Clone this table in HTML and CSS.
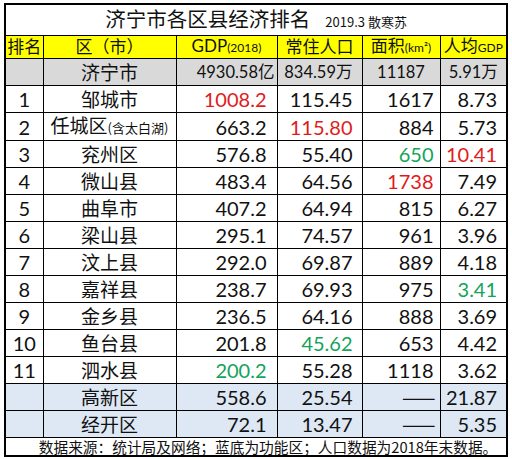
FILE: index.html
```html
<!DOCTYPE html>
<html lang="zh-CN">
<head>
  <meta charset="UTF-8">
  <title>济宁市各区县经济排名</title>
  <link rel="stylesheet" href="styles.css">
</head>
<body>

  <table class="rank">
    <colgroup>
      <col class="c-no">
      <col class="c-name">
      <col class="c-gdp">
      <col class="c-pop">
      <col class="c-area">
      <col class="c-avg">
    </colgroup>

    <tr class="title">
      <td colspan="6">
        <span class="big">济宁市各区县经济排名</span>
        <span class="by">2019.3 散寒苏</span>
      </td>
    </tr>

    <tr class="head">
      <td>排名</td>
      <td>区（市）</td>
      <td>GDP<small>(2018)</small></td>
      <td>常住人口</td>
      <td>面积<small>(km²)</small></td>
      <td>人均<small>GDP</small></td>
    </tr>

    <tr class="total">
      <td></td>
      <td class="name">济宁市</td>
      <td class="gdp">4930.58亿</td>
      <td class="pop">834.59万</td>
      <td class="mid">11187</td>
      <td class="mid">5.91万</td>
    </tr>

    <tr>
      <td class="no">1</td><td class="name">邹城市</td>
      <td class="gdp red">1008.2</td><td class="pop">115.45</td><td class="area">1617</td><td class="avg">8.73</td>
    </tr>
    <tr>
      <td class="no">2</td><td class="name">任城区<small>(含太白湖)</small></td>
      <td class="gdp">663.2</td><td class="pop red">115.80</td><td class="area">884</td><td class="avg">5.73</td>
    </tr>
    <tr>
      <td class="no">3</td><td class="name">兖州区</td>
      <td class="gdp">576.8</td><td class="pop">55.40</td><td class="area green">650</td><td class="avg red">10.41</td>
    </tr>
    <tr>
      <td class="no">4</td><td class="name">微山县</td>
      <td class="gdp">483.4</td><td class="pop">64.56</td><td class="area red">1738</td><td class="avg">7.49</td>
    </tr>
    <tr>
      <td class="no">5</td><td class="name">曲阜市</td>
      <td class="gdp">407.2</td><td class="pop">64.94</td><td class="area">815</td><td class="avg">6.27</td>
    </tr>
    <tr>
      <td class="no">6</td><td class="name">梁山县</td>
      <td class="gdp">295.1</td><td class="pop">74.57</td><td class="area">961</td><td class="avg">3.96</td>
    </tr>
    <tr>
      <td class="no">7</td><td class="name">汶上县</td>
      <td class="gdp">292.0</td><td class="pop">69.87</td><td class="area">889</td><td class="avg">4.18</td>
    </tr>
    <tr>
      <td class="no">8</td><td class="name">嘉祥县</td>
      <td class="gdp">238.7</td><td class="pop">69.93</td><td class="area">975</td><td class="avg green">3.41</td>
    </tr>
    <tr>
      <td class="no">9</td><td class="name">金乡县</td>
      <td class="gdp">236.5</td><td class="pop">64.16</td><td class="area">888</td><td class="avg">3.69</td>
    </tr>
    <tr>
      <td class="no">10</td><td class="name">鱼台县</td>
      <td class="gdp">201.8</td><td class="pop green">45.62</td><td class="area">653</td><td class="avg">4.42</td>
    </tr>
    <tr>
      <td class="no">11</td><td class="name">泗水县</td>
      <td class="gdp green">200.2</td><td class="pop">55.28</td><td class="area">1118</td><td class="avg">3.62</td>
    </tr>

    <tr class="zone">
      <td></td><td class="name">高新区</td>
      <td class="gdp">558.6</td><td class="pop">25.54</td><td class="area dash">——</td><td class="avg">21.87</td>
    </tr>
    <tr class="zone">
      <td></td><td class="name">经开区</td>
      <td class="gdp">72.1</td><td class="pop">13.47</td><td class="area dash">——</td><td class="avg">5.35</td>
    </tr>

    <tr class="foot">
      <td colspan="6">数据来源：统计局及网络；蓝底为功能区；人口数据为2018年末数据。</td>
    </tr>
  </table>

</body>
</html>
```

FILE: styles.css
```css
body {
  margin: 0;
  background-color: #fff;
  color: #111;
  font-family: Lato, "Noto Sans CJK SC", sans-serif;
}

.rank {
  margin: 3px 0 0 4px;
  width: 504px;
  table-layout: fixed;
  border-collapse: collapse;
  border: 2px solid #000;
}

.c-no { width: 38px; }
.c-name { width: 133px; }
.c-gdp { width: 101px; }
.c-pop { width: 85px; }
.c-area { width: 78px; }
.c-avg { width: 67px; }

.rank td {
  border: 1px solid #000;
  height: 26px;
  padding: 0;
  font-size: 20px;
  line-height: 24px;
  white-space: nowrap;
  overflow: hidden;
  vertical-align: middle;
}

/* title row */
.rank .title td {
  height: 27px;
  line-height: 27px;
  text-align: center;
  background-color: #fff;
  overflow: visible;
}

.title .big {
  font-family: "Noto Sans CJK SC", sans-serif;
  font-size: 20.5px;
}

.title .by {
  font-family: "Noto Sans CJK SC", sans-serif;
  font-size: 13px;
  margin-left: 10px;
}

/* header row */
.rank .head td {
  height: 20px;
  line-height: 20px;
  background-color: #ffff00;
  text-align: center;
  font-family: Lato, "Noto Sans CJK SC", sans-serif;
  font-size: 17px;
}

.head small {
  font-size: 12px;
}

/* city total */
.rank .total td {
  background-color: #d9d9d9;
  font-size: 16.5px;
}

.rank .zone td {
  background-color: #dde8f4;
}

.rank td.no {
  text-align: center;
}

.rank td.name {
  text-align: center;
  font-family: "Noto Sans CJK SC", sans-serif;
  font-size: 19px;
}

.name small {
  font-size: 13px;
}

.rank td.gdp {
  text-align: right;
  padding-right: 10px;
}

.rank .total td.gdp {
  padding-right: 2px;
}

.rank td.pop {
  text-align: right;
  padding-right: 9px;
}

.rank td.area {
  text-align: right;
  padding-right: 6px;
}

.rank td.avg {
  text-align: right;
  padding-right: 9px;
}

.rank td.mid {
  text-align: center;
}

.rank td.dash {
  font-family: "Noto Sans CJK SC", sans-serif;
  font-size: 20px;
  line-height: 20px;
  padding-right: 4px;
}

.red { color: #e01b1b; }
.green { color: #14a35a; }

/* source line */
.rank .foot td {
  height: 17px;
  line-height: 17px;
  text-align: center;
  font-family: "Noto Sans CJK SC", sans-serif;
  font-size: 14.7px;
  padding-left: 24px;
}
```
